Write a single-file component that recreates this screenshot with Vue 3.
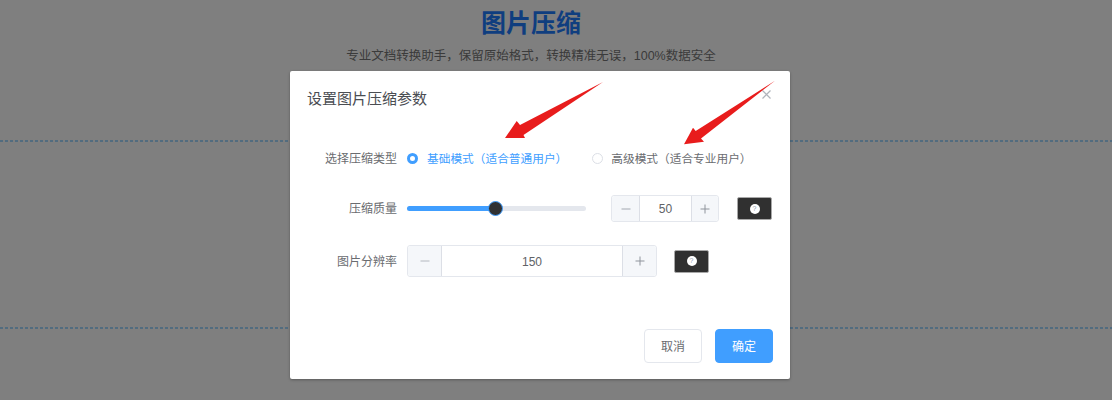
<script setup>
const quality = 50
const resolution = 150
</script>

<template>
  <div class="page">
    <header class="hero">
      <h1 class="hero-title">图片压缩</h1>
      <p class="hero-sub">专业文档转换助手，保留原始格式，转换精准无误，100%数据安全</p>
    </header>
    <section class="upload-box"></section>

    <div class="overlay">
      <div class="dialog">
        <div class="dialog-header">
          <span class="dialog-title">设置图片压缩参数</span>
          <svg class="close" viewBox="0 0 9 9" width="9" height="9">
            <path d="M0.5 0.5 L8.5 8.5 M8.5 0.5 L0.5 8.5" stroke="#b0b5bc" stroke-width="1.2" fill="none" />
          </svg>
        </div>

        <div class="form">
          <div class="row row-radio">
            <label class="row-label">选择压缩类型</label>
            <div class="radio checked">
              <span class="radio-dot"></span>
              <span class="radio-text">基础模式（适合普通用户）</span>
            </div>
            <div class="radio second">
              <span class="radio-dot"></span>
              <span class="radio-text">高级模式（适合专业用户）</span>
            </div>
          </div>

          <div class="row row-quality">
            <label class="row-label">压缩质量</label>
            <div class="slider">
              <div class="slider-fill" :style="{ width: quality + '%' }"></div>
              <span class="slider-thumb" :style="{ left: quality + '%' }"></span>
            </div>
            <div class="number small">
              <span class="step left"><svg viewBox="0 0 12 12" width="12" height="12"><path d="M1.5 6 H10.5" stroke="#a3a8b1" fill="none" /></svg></span>
              <span class="value">{{ quality }}</span>
              <span class="step right"><svg viewBox="0 0 12 12" width="12" height="12"><path d="M1.5 6 H10.5 M6 1.5 V10.5" stroke="#8f949c" fill="none" /></svg></span>
            </div>
            <button class="help help-a"><span class="help-icon">?</span></button>
          </div>

          <div class="row row-res">
            <label class="row-label">图片分辨率</label>
            <div class="number large">
              <span class="step left"><svg viewBox="0 0 12 12" width="12" height="12"><path d="M1.5 6 H10.5" stroke="#b4b8bf" fill="none" /></svg></span>
              <span class="value">{{ resolution }}</span>
              <span class="step right"><svg viewBox="0 0 12 12" width="12" height="12"><path d="M1.5 6 H10.5 M6 1.5 V10.5" stroke="#8f949c" fill="none" /></svg></span>
            </div>
            <button class="help help-b"><span class="help-icon">?</span></button>
          </div>
        </div>

        <div class="dialog-footer">
          <button class="btn">取消</button>
          <button class="btn primary">确定</button>
        </div>
      </div>
    </div>

    <svg class="arrows" viewBox="0 0 1112 400" width="1112" height="400">
      <polygon fill="#e81c1c" points="603,82 520,125 516.7,121 505,138 525,138 523.5,135" />
      <polygon fill="#e81c1c" points="775,80.7 695.7,131 693,127.7 684,144.3 704,141.7 701,138.5" />
    </svg>
  </div>
</template>

<style>
html, body { margin: 0; }
</style>

<style scoped>
.page {
  position: relative;
  width: 1112px;
  height: 400px;
  overflow: hidden;
  background: #fff;
  font-family: "Noto Sans CJK SC", "Liberation Sans", sans-serif;
}
.hero {
  width: 1062px;
  text-align: center;
  padding-top: 5px;
}
.hero-title {
  margin: 0;
  height: 32px;
  line-height: 32px;
  font-size: 25px;
  font-weight: 700;
  color: #1f7cff;
}
.hero-sub {
  margin: 9px 0 0;
  height: 20px;
  line-height: 20px;
  font-size: 12.5px;
  color: #767676;
  font-family: "Liberation Sans", "Noto Sans CJK SC", sans-serif;
}
.upload-box {
  margin-top: 74px;
  height: 189px;
  background-image:
    repeating-linear-gradient(90deg, #a4d8ff 0 3px, transparent 3px 5px),
    repeating-linear-gradient(90deg, #a4d8ff 0 3px, transparent 3px 5px);
  background-size: 100% 2px, 100% 2px;
  background-position: top, bottom;
  background-repeat: no-repeat;
  width: 1112px;
}
.overlay {
  position: absolute;
  inset: 0;
  background: rgba(0, 0, 0, 0.5);
  padding: 71px 0 0 290px;
  box-sizing: border-box;
}
.dialog {
  position: relative;
  width: 500px;
  height: 308px;
  background: #fff;
  border-radius: 2px;
  box-shadow: 0 1px 3px rgba(0, 0, 0, 0.3);
  display: flex;
  flex-direction: column;
}
.dialog-header {
  height: 73px;
  padding: 17px 17px 0;
  box-sizing: border-box;
  flex: none;
}
.dialog-title {
  font-size: 15px;
  line-height: 20px;
  color: #4a4d52;
  display: block;
}
.close {
  position: absolute;
  top: 19px;
  right: 19px;
}
.form {
  display: flex;
  flex-direction: column;
  gap: 23px;
}
.row {
  display: flex;
  align-items: center;
}
.row-radio { height: 28px; }
.row-quality { height: 27px; }
.row-res { height: 32px; }
.row-label {
  width: 107px;
  margin-right: 10px;
  padding-bottom: 2px;
  text-align: right;
  font-size: 12px;
  color: #6a6c70;
  flex: none;
}
.radio {
  display: flex;
  align-items: center;
  font-size: 11.7px;
  color: #6a6c70;
}
.radio-text { padding-bottom: 2px; }
.radio.second { margin-left: 25px; }
.radio-dot {
  width: 11px;
  height: 11px;
  box-sizing: border-box;
  border-radius: 50%;
  border: 1px solid #dcdfe6;
  background: #fff;
  margin-right: 9px;
  display: block;
}
.radio.second .radio-dot { margin-right: 8px; }
.radio.checked { color: #409eff; }
.radio.checked .radio-dot {
  border: 3.5px solid #409eff;
}
.slider {
  position: relative;
  width: 179px;
  height: 5px;
  border-radius: 3px;
  background: #e4e7ed;
  flex: none;
}
.slider-fill {
  height: 100%;
  background: #409eff;
  border-radius: 3px;
}
.slider-thumb {
  position: absolute;
  top: -5px;
  width: 15px;
  height: 15px;
  margin-left: -9px;
  box-sizing: border-box;
  border-radius: 50%;
  background: #303133;
  border: 1px solid #409eff;
}
.number {
  display: flex;
  box-sizing: border-box;
  border: 1px solid #e4e7ed;
  border-radius: 3px;
  background: #fff;
  height: 100%;
  flex: none;
  font-family: "Liberation Sans", sans-serif;
  color: #606266;
  font-size: 12px;
}
.number.small { width: 108px; margin-left: 25px; }
.number.large { width: 250px; }
.step {
  flex: none;
  box-sizing: border-box;
  width: 28px;
  background: #f5f7fa;
  display: flex;
  align-items: center;
  justify-content: center;
}
.small .step.right { width: 27px; }
.large .step { width: 34px; }
.step.left { border-right: 1px solid #dcdfe6; border-radius: 3px 0 0 3px; }
.step.right { border-left: 1px solid #dcdfe6; border-radius: 0 3px 3px 0; }
.value {
  flex: 1;
  text-align: center;
  align-self: center;
}
.large .value { padding-top: 1px; }
.help {
  flex: none;
  box-sizing: border-box;
  width: 35px;
  height: 23px;
  padding: 0;
  border: 1px solid #a8a8a8;
  border-radius: 2px;
  background: #303030;
  display: flex;
  align-items: center;
  justify-content: center;
}
.help-a { margin-left: 18px; }
.help-b { margin-left: 17px; }
.help-icon {
  width: 10px;
  height: 10px;
  border-radius: 50%;
  background: #fff;
  color: #8d99ab;
  font-size: 7px;
  line-height: 10px;
  text-align: center;
  font-family: "Liberation Sans", sans-serif;
  font-weight: 400;
}
.dialog-footer {
  margin-top: auto;
  padding: 0 17px 16px 0;
  display: flex;
  justify-content: flex-end;
  gap: 13px;
}
.btn {
  width: 58px;
  height: 34px;
  padding: 0 0 2px;
  border: 1px solid #e4e7ed;
  border-radius: 4px;
  background: #fff;
  color: #6a6c70;
  font-size: 12px;
  font-family: inherit;
}
.btn.primary {
  background: #409eff;
  border-color: #409eff;
  color: #fff;
}
.arrows {
  position: absolute;
  top: 0;
  left: 0;
  pointer-events: none;
}
</style>
